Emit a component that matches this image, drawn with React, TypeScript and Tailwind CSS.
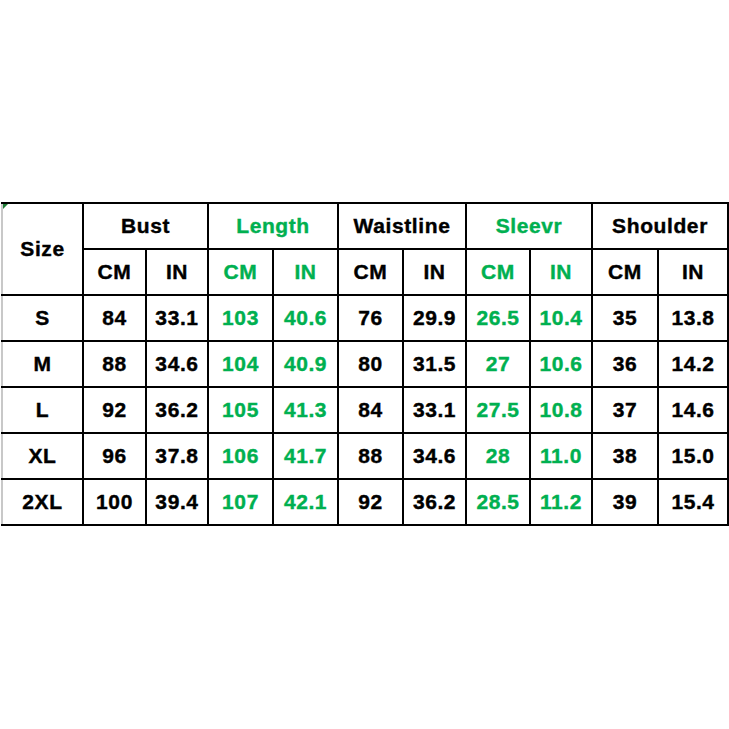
const GREEN = "text-[#00b050]";

type Row = { size: string; vals: string[] };

const rows: Row[] = [
  { size: "S", vals: ["84", "33.1", "103", "40.6", "76", "29.9", "26.5", "10.4", "35", "13.8"] },
  { size: "M", vals: ["88", "34.6", "104", "40.9", "80", "31.5", "27", "10.6", "36", "14.2"] },
  { size: "L", vals: ["92", "36.2", "105", "41.3", "84", "33.1", "27.5", "10.8", "37", "14.6"] },
  { size: "XL", vals: ["96", "37.8", "106", "41.7", "88", "34.6", "28", "11.0", "38", "15.0"] },
  { size: "2XL", vals: ["100", "39.4", "107", "42.1", "92", "36.2", "28.5", "11.2", "39", "15.4"] },
];

const groups = [
  { name: "Bust", green: false },
  { name: "Length", green: true },
  { name: "Waistline", green: false },
  { name: "Sleevr", green: true },
  { name: "Shoulder", green: false },
];

const widths = [81, 63, 62, 65, 65, 65, 63, 64, 62, 66, 70];

const cell = "border-2 border-black h-[46px] p-0 text-center align-middle";

export default function App() {
  return (
    <div className="w-[729px] h-[729px] bg-white pt-[202px] pl-[1px] font-['Liberation_Sans',Arial,sans-serif] font-bold text-[21px] tracking-[0.6px] [-webkit-text-stroke:0.4px_currentColor] text-black">
      <table className="table-fixed border-collapse w-[728px]">
        <colgroup>
          {widths.map((w, i) => (
            <col key={i} style={{ width: w }} />
          ))}
        </colgroup>
        <thead>
          <tr>
            <th rowSpan={2} className={`${cell} relative border-l-[#c8c8c8]`}>
              <span className="absolute left-0 top-0 w-0 h-0 border-t-[5px] border-r-[5px] border-t-[#1e7b34] border-r-transparent" />
              Size
            </th>
            {groups.map((g) => (
              <th key={g.name} colSpan={2} className={`${cell} ${g.green ? GREEN : ""}`}>
                {g.name}
              </th>
            ))}
          </tr>
          <tr>
            {groups.map((g) => (
              <>
                <th key={g.name + "cm"} className={`${cell} ${g.green ? GREEN : ""}`}>CM</th>
                <th key={g.name + "in"} className={`${cell} ${g.green ? GREEN : ""}`}>IN</th>
              </>
            ))}
          </tr>
        </thead>
        <tbody>
          {rows.map((r) => (
            <tr key={r.size}>
              <td className={`${cell} border-l-[#c8c8c8]`}>{r.size}</td>
              {r.vals.map((v, i) => {
                const green = i === 2 || i === 3 || i === 6 || i === 7;
                return (
                  <td key={i} className={`${cell} ${green ? GREEN : ""}`}>
                    {v}
                  </td>
                );
              })}
            </tr>
          ))}
        </tbody>
      </table>
    </div>
  );
}
